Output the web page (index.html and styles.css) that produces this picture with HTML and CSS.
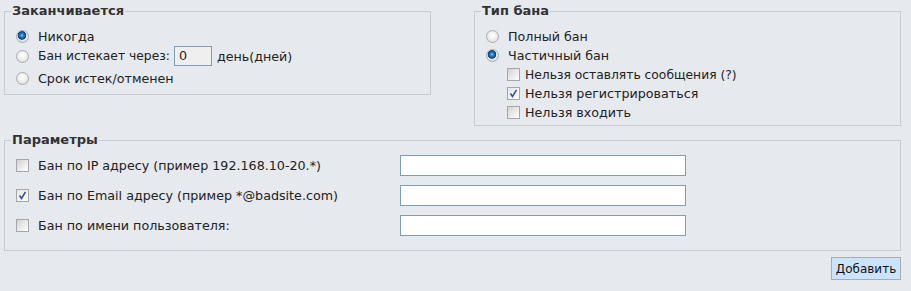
FILE: index.html
```html
<!DOCTYPE html>
<html lang="ru">
<head>
<meta charset="utf-8">
<title>Бан</title>
<link rel="stylesheet" href="styles.css">
</head>
<body>
<form class="page">
  <div class="top">
    <fieldset class="box box-expire">
      <legend>Заканчивается</legend>
      <label class="row"><span class="radio on"></span><span>Никогда</span></label>
      <label class="row row-input"><span class="radio"></span><span class="tight">Бан истекает через:</span><span class="days">0</span><span>день(дней)</span></label>
      <label class="row"><span class="radio"></span><span>Срок истек/отменен</span></label>
    </fieldset>
    <fieldset class="box box-type">
      <legend>Тип бана</legend>
      <label class="row"><span class="radio"></span><span>Полный бан</span></label>
      <label class="row"><span class="radio on"></span><span>Частичный бан</span></label>
      <label class="row sub"><span class="cb"></span><span class="tight">Нельзя оставлять сообщения (?)</span></label>
      <label class="row sub"><span class="cb on"><svg viewBox="0 0 11 11" width="11" height="11"><path d="M2.5 5.5 L4.5 8.5 L8.5 1.8" fill="none" stroke="#3a4cb0" stroke-width="1.6"/></svg></span><span>Нельзя регистрироваться</span></label>
      <label class="row sub"><span class="cb"></span><span>Нельзя входить</span></label>
    </fieldset>
  </div>
  <fieldset class="box box-params">
    <legend>Параметры</legend>
    <div class="grid">
      <label class="prow"><span class="cb"></span><span>Бан по IP адресу (пример 192.168.10-20.*)</span></label>
      <span class="field"></span>
      <label class="prow"><span class="cb on"><svg viewBox="0 0 11 11" width="11" height="11"><path d="M2.5 5.5 L4.5 8.5 L8.5 1.8" fill="none" stroke="#3a4cb0" stroke-width="1.6"/></svg></span><span>Бан по Email адресу (пример *@badsite.com)</span></label>
      <span class="field"></span>
      <label class="prow"><span class="cb"></span><span>Бан по имени пользователя:</span></label>
      <span class="field"></span>
    </div>
  </fieldset>
  <div class="actions"><button type="button" class="btn">Добавить</button></div>
</form>
</body>
</html>
```
FILE: styles.css
```css
html, body {
  margin: 0;
  background: #e6e9ee;
}
body {
  font-family: "DejaVu Sans", Verdana, sans-serif;
  font-size: 12.7px;
  color: #222;
}
.page {
  padding: 3px 10px 0 4px;
  margin: 0;
}
.top {
  display: flex;
  gap: 43px;
  align-items: flex-start;
}
.box {
  margin: 0;
  border: 1px solid #c8cbd0;
  min-width: 0;
  box-sizing: border-box;
}
.box legend {
  font-weight: bold;
  color: #333;
  font-size: 13px;
  line-height: 16px;
  padding: 0 1px;
  margin-left: -5px;
}
.box-expire {
  width: 427px;
  padding: 8px 11px 6px;
}
.box-type {
  width: 427px;
  padding: 8px 11px 3px;
}
.row {
  display: flex;
  align-items: center;
  height: 19px;
}
.row-input {
  height: 20px;
  margin-bottom: 3px;
}
.tight {
  font-size: 12.3px;
}
.radio {
  width: 11px;
  height: 11px;
  border-radius: 50%;
  border: 1px solid #a9abae;
  background: radial-gradient(circle at 50% 40%, #ffffff 0, #f2f2f2 40%, #d4d4d4 100%);
  margin-right: 9px;
  flex: none;
}
.radio.on {
  background:
    radial-gradient(circle at 45% 40%, #8fd0ff 0, #2a88d0 1.5px, #0b4d8f 3.5px, #0b3f78 4px, transparent 4.6px),
    radial-gradient(circle at 50% 40%, #ffffff 0, #f0f0f0 40%, #cfcfcf 100%);
}
.cb {
  width: 11px;
  height: 11px;
  border: 1px solid #a4a6a9;
  background: linear-gradient(135deg, #d2d2d2 0, #eeeeee 60%, #ffffff 100%);
  display: flex;
  align-items: center;
  justify-content: center;
  flex: none;
}
.cb.on {
  background: linear-gradient(135deg, #e4e4e4 0, #f6f6f6 60%, #ffffff 100%);
}
.sub {
  padding-left: 21px;
}
.sub .cb {
  margin-right: 5px;
}
.days {
  box-sizing: border-box;
  width: 38px;
  height: 20px;
  border: 1px solid #7f9db9;
  background: #efefef;
  margin: 0 5px 0 4px;
  padding-left: 4px;
  line-height: 18px;
}
.box-params {
  margin-top: 6px;
  padding: 7px 11px 14px;
}
.grid {
  display: grid;
  grid-template-columns: 384px 286px;
  row-gap: 9px;
  align-items: center;
}
.prow {
  display: flex;
  align-items: center;
  height: 20px;
}
.prow .cb {
  margin-right: 9px;
}
.field {
  display: block;
  box-sizing: border-box;
  height: 21px;
  border: 1px solid #7f9db9;
  background: #fff;
}
.actions {
  display: flex;
  justify-content: flex-end;
  margin-top: 6px;
}
.btn {
  box-sizing: border-box;
  width: 70px;
  height: 23px;
  border: 1px solid #a8acb0;
  background: #cce4fb;
  color: #111;
  font-family: "DejaVu Sans", Verdana, sans-serif;
  font-size: 12px;
  padding: 0;
}
```
